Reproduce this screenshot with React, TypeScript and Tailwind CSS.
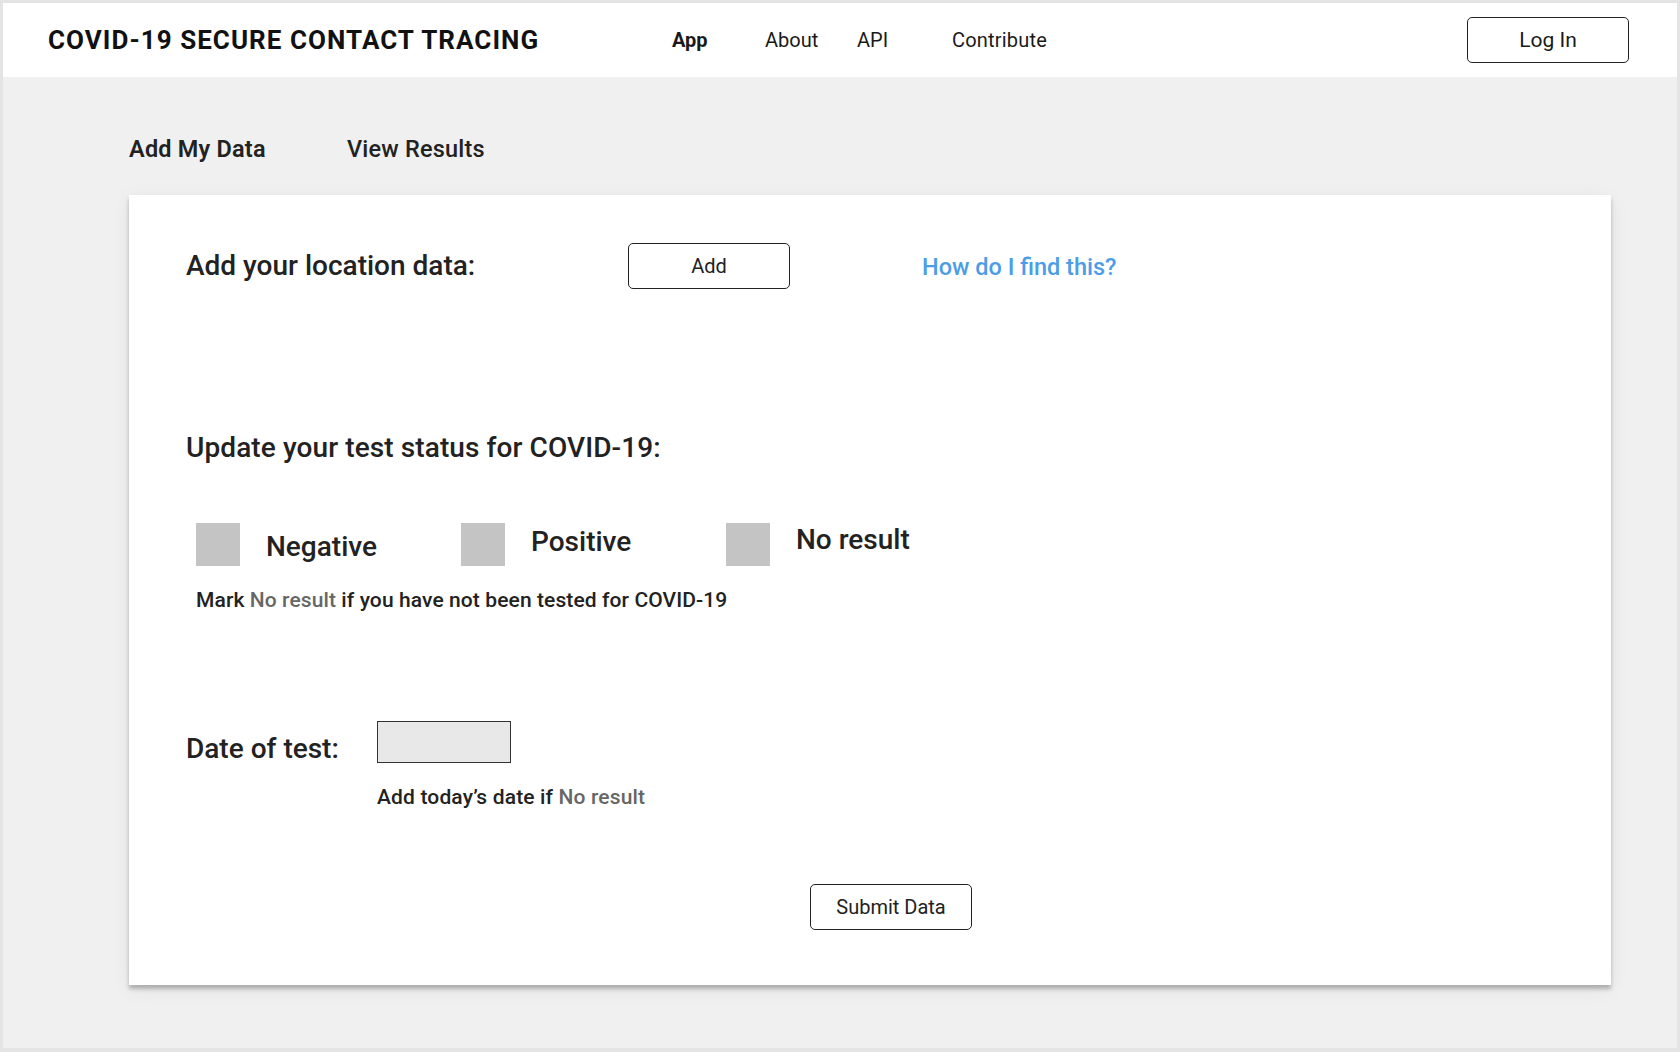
import { useState } from "react";

type Status = "negative" | "positive" | "none";

const STATUS_OPTIONS: { key: Status; label: string; offset: string }[] = [
    { key: "negative", label: "Negative", offset: "mt-[7px]" },
    { key: "positive", label: "Positive", offset: "mt-[2px]" },
    { key: "none", label: "No result", offset: "mt-0" },
];

function Header() {
    return (
        <header className="h-[74px] bg-white flex items-center pl-[45px] pr-[48px]">
            <h1 className="w-[624px] text-[26px] font-bold tracking-[1.05px] text-[#111]">
                COVID-19 SECURE CONTACT TRACING
            </h1>
            <nav className="flex items-center text-[20px] text-[#1a1a1a]">
                <a className="w-[93px] font-bold">App</a>
                <a className="w-[92px]">About</a>
                <a className="w-[95px]">API</a>
                <a className="tracking-[0.2px]">Contribute</a>
            </nav>
            <button className="ml-auto w-[162px] h-[46px] pt-[2px] rounded-[5px] border-[1.5px] border-[#222] text-[21px] text-[#1a1a1a]">
                Log In
            </button>
        </header>
    );
}

function App() {
    const [status, setStatus] = useState<Status>();

    return (
        <div className="w-[1680px] h-[1052px] bg-[#f0f0f0] border-x-[3px] border-t-[3px] border-b-[4px] border-[#e4e4e4] font-['Roboto',sans-serif] text-[#222]">
            <Header />
            <main>
                <div className="flex pl-[126px] pt-[55px] h-[118px] text-[23.5px] tracking-[0.2px]">
                    <span className="w-[218px] font-semibold">Add My Data</span>
                    <span className="font-medium">View Results</span>
                </div>
                <section className="ml-[126px] w-[1482px] bg-white shadow-[0_4px_4px_rgba(0,0,0,0.25),0_4px_20px_rgba(0,0,0,0.06)] pl-[57px] pt-[48px] pb-[55px]">
                    <div className="flex items-center h-[46px]">
                        <h2 className="w-[442px] text-[28px] font-medium">Add your location data:</h2>
                        <button className="w-[162px] h-[46px] rounded-[5px] border-[1.5px] border-[#222] text-[20px]">
                            Add
                        </button>
                        <a className="ml-[132px] mt-[3px] text-[23.5px] font-medium text-[#4c9de8]">How do I find this?</a>
                    </div>

                    <h2 className="mt-[143px] text-[28px] leading-[32px] font-medium tracking-[0.1px]">
                        Update your test status for COVID-19:
                    </h2>

                    <div className="mt-[59px] ml-[10px] flex">
                        {STATUS_OPTIONS.map((option) => (
                            <label
                                key={option.key}
                                className="w-[265px] flex items-start gap-[26px] cursor-pointer"
                                onClick={() => setStatus(option.key)}
                            >
                                <span
                                    className={
                                        status === option.key
                                            ? "w-[44px] h-[43px] bg-[#888]"
                                            : "w-[44px] h-[43px] bg-[#c4c4c4]"
                                    }
                                />
                                <span className={`${option.offset} text-[28px] leading-[34px] font-medium`}>
                                    {option.label}
                                </span>
                            </label>
                        ))}
                    </div>

                    <p className="mt-[22px] ml-[10px] text-[21px] leading-[25px] font-medium tracking-[0.1px]">
                        Mark <span className="text-[#666]">No result</span> if you have not been tested for COVID-19
                    </p>

                    <div className="mt-[108px] flex items-start">
                        <span className="w-[191px] mt-[12px] text-[28px] leading-[32px] font-medium">Date of test:</span>
                        <input className="w-[134px] h-[42px] bg-[#e8e8e8] border border-[#333]" />
                    </div>
                    <p className="mt-[20px] ml-[191px] text-[21px] leading-[25px] font-medium tracking-[0.15px]">
                        Add today’s date if <span className="text-[#666]">No result</span>
                    </p>

                    <button className="mt-[74px] ml-[624px] w-[162px] h-[46px] rounded-[5px] border-[1.5px] border-[#222] text-[20px]">
                        Submit Data
                    </button>
                </section>
            </main>
        </div>
    );
}

export default App;
